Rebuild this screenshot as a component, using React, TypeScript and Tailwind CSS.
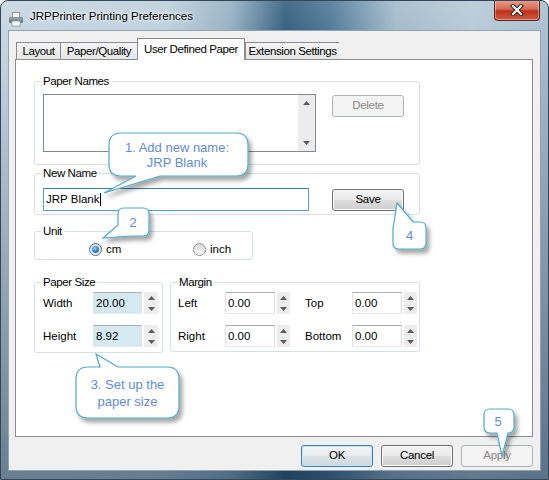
import React from 'react';

const ui = "font-['Liberation_Sans',Arial,sans-serif]";

const Tri = ({ up }: { up?: boolean }) => (
  <svg width="7" height="4" viewBox="0 0 7 4">
    <path d={up ? 'M0 4 L3.5 0 L7 4 Z' : 'M0 0 L3.5 4 L7 0 Z'} fill="#5c5c5c" />
  </svg>
);

const Spin = ({ w = 'w-[13px]' }: { w?: string }) => (
  <div className={`ml-[2px] flex h-[22px] flex-col bg-[#ededed] ${w}`}>
    <div className="flex h-[11px] items-center justify-center">
      <Tri up />
    </div>
    <div className="flex h-[11px] items-center justify-center">
      <Tri />
    </div>
  </div>
);

const Box = ({ value, w, hl }: { value: string; w: string; hl?: boolean }) => (
  <div
    className={`h-[22px] border border-[#abadb3] border-b-[#e3e9ef] border-l-[#e2e3ea] border-r-[#dbdfe6] pl-[2px] pt-[2px] text-[11.5px] leading-[16px] text-black ${w} ${
      hl ? 'bg-[#d4e9f1]' : 'bg-white'
    }`}
  >
    {value}
  </div>
);

const Group = ({ label, className, children }: { label: string; className: string; children?: React.ReactNode }) => (
  <div className={`relative rounded-[3px] border border-[#d5dfe5] ${className}`}>
    <span className="absolute -top-[8px] left-[6px] bg-white px-[2px] text-[11.5px] leading-[14px] tracking-[-0.4px] text-black">
      {label}
    </span>
    {children}
  </div>
);

const Button = ({ label, kind = 'normal' }: { label: string; kind?: 'normal' | 'default' | 'disabled' }) => {
  const look =
    kind === 'disabled'
      ? 'border-[#adb2b5] bg-[#f4f4f4] text-[#8a8a8a]'
      : kind === 'default'
      ? 'border-[#3c7fb1] bg-[linear-gradient(180deg,#f2f5f7_0%,#eaeef1_49%,#dce3e8_50%,#cfd8de_100%)] shadow-[inset_0_0_0_1px_#c4e5f6] text-black'
      : 'border-[#707070] bg-[linear-gradient(180deg,#f2f2f2_0%,#ebebeb_49%,#dddddd_50%,#cfcfcf_100%)] shadow-[inset_0_0_0_1px_#fbfbfb] text-black';
  return (
    <div className={`flex h-[22px] w-[72px] items-center justify-center rounded-[3px] border text-[11.5px] tracking-[-0.3px] ${look}`}>
      {label}
    </div>
  );
};

const Radio = ({ checked }: { checked?: boolean }) => (
  <span
    className={`flex h-[13px] w-[13px] items-center justify-center rounded-full border bg-[linear-gradient(180deg,#d9d9d9_0%,#f7f7f7_100%)] ${
      checked ? 'border-[#3e6f99]' : 'border-[#8e8f8f]'
    }`}
  >
    {checked && <span className="h-[7px] w-[7px] rounded-full bg-[radial-gradient(circle_at_40%_35%,#9fd3f5_0%,#2a7bc4_55%,#134f8a_100%)]" />}
  </span>
);

const Tab = ({ label, w, active }: { label: string; w: string; active?: boolean }) =>
  active ? (
    <div className={`relative z-10 -mb-[1px] flex h-[22px] items-center justify-center border border-b-0 border-[#898c95] bg-white pt-[1px] text-[11.5px] tracking-[-0.4px] text-black ${w}`}>
      {label}
    </div>
  ) : (
    <div
      className={`flex h-[17px] items-center justify-center border border-b-0 border-r-0 border-[#898c95] bg-[linear-gradient(180deg,#f4f4f4_0%,#e6e6e6_100%)] pt-[1px] text-[11.5px] tracking-[-0.4px] text-black ${w}`}
    >
      {label}
    </div>
  );

const Printer = () => (
  <svg width="16" height="16" viewBox="0 0 16 16">
    <rect x="4.5" y="1.5" width="7" height="5" fill="#fff" stroke="#8a949c" />
    <rect x="1" y="6" width="14" height="6" rx="1.5" fill="#6f7b84" />
    <rect x="1.5" y="6.5" width="13" height="2" fill="#9aa5ad" />
    <rect x="4" y="10" width="8" height="5" fill="#fff" stroke="#9aa3aa" />
    <rect x="12" y="8" width="1.5" height="1.5" fill="#3fc3e0" />
  </svg>
);

const bubbles = [
  'M121 133 H236 Q248 133 248 145 V164 Q248 176 236 176 H160 L104 193 L136 176 H121 Q109 176 109 164 V145 Q109 133 121 133 Z',
  'M124 208 H143 Q149 208 149 214 V230 Q149 236 143 236 H130 L103 238 L118 225 V214 Q118 208 124 208 Z',
  'M88 367 H100 L96 354 L118 367 H167 Q179 367 179 379 V406 Q179 418 167 418 H88 Q76 418 76 406 V379 Q76 367 88 367 Z',
  'M393 229 L397 203 L413 222 H420 Q426 222 426 228 V243 Q426 249 420 249 H399 Q393 249 393 243 Z',
  'M490 409 H508 Q514 409 514 415 V427 Q514 433 508 433 L502 456 L497 433 H490 Q484 433 484 427 V415 Q484 409 490 409 Z',
];

const notes = [
  { cls: 'left-[109px] top-[133px] w-[136px] h-[43px] leading-[15px]', text: ['1. Add new name:', 'JRP Blank'] },
  { cls: 'left-[118px] top-[208px] w-[30px] h-[28px] leading-[15px]', text: ['2'] },
  { cls: 'left-[76px] top-[367px] w-[103px] h-[52px] leading-[17px]', text: ['3. Set up the', 'paper size'] },
  { cls: 'left-[393px] top-[222px] w-[33px] h-[27px] leading-[15px]', text: ['4'] },
  { cls: 'left-[484px] top-[409px] w-[28px] h-[24px] leading-[15px]', text: ['5'] },
];

export default function App() {
  return (
    <div className={`relative h-[480px] w-[549px] ${ui}`}>
      <div className="flex h-full w-full flex-col overflow-hidden rounded-t-[8px] border border-[#33475a] bg-[linear-gradient(180deg,rgba(255,255,255,0.12)_0%,rgba(0,0,0,0)_10%,rgba(15,40,65,0.5)_100%),linear-gradient(90deg,#c5d5e0_0%,#bdd0dc_30%,#93afc2_42%,#2f5b7b_52%,#4a7493_60%,#a0b9ca_72%,#b6c9d6_86%,#a7bdcd_100%)]">
        {/* title bar */}
        <div className="relative flex h-[29px] shrink-0 items-start">
          <div className="ml-[7px] mt-[10px]">
            <Printer />
          </div>
          <span className="ml-[6px] mt-[8px] text-[11.5px] leading-[15px] text-black [text-shadow:0_0_6px_#fff,0_0_3px_#fff]">
            JRPPrinter Printing Preferences
          </span>
          <div className="absolute -top-[1px] right-[8px] flex h-[21px] w-[46px] items-center justify-center rounded-b-[4px] border border-t-0 border-[#5a2a22] bg-[linear-gradient(180deg,#e8a293_0%,#d66a55_45%,#bd3218_55%,#d25a42_100%)] shadow-[inset_0_0_0_1px_rgba(255,255,255,0.35)]">
            <svg width="14" height="12" viewBox="0 0 14 12">
              <path d="M3 2 L11 10 M11 2 L3 10" stroke="#3b2520" strokeWidth="4.2" strokeLinecap="square" />
              <path d="M3 2 L11 10 M11 2 L3 10" stroke="#fff" strokeWidth="2.2" strokeLinecap="square" />
            </svg>
          </div>
        </div>

        {/* client area */}
        <div className="mx-[7px] h-[441px] border border-[#8fa3b2] bg-[#f0f0f0] px-[6px] pt-[7px]">
          <div className="ml-[1px] flex h-[21px] items-end">
            <Tab label="Layout" w="w-[44px]" />
            <Tab label="Paper/Quality" w="w-[77px]" />
            <Tab label="User Defined Paper" w="w-[108px]" active />
            <Tab label="Extension Settings" w="w-[94px]" />
          </div>

          <div className="h-[378px] w-[518px] border border-[#898c95] bg-white pl-[18px] pt-[21px]">
            <Group label="Paper Names" className="h-[84px] w-[386px]">
              <div className="flex items-start pl-[8px] pt-[12px]">
                <div className="flex h-[58px] w-[273px] justify-end border border-[#828790] bg-white">
                  <div className="flex h-full w-[17px] flex-col items-center justify-between bg-[#ececec] py-[6px]">
                    <Tri up />
                    <Tri />
                  </div>
                </div>
                <div className="ml-[16px] mt-[1px]">
                  <Button label="Delete" kind="disabled" />
                </div>
              </div>
            </Group>

            <Group label="New Name" className="mt-[8px] h-[42px] w-[386px]">
              <div className="flex items-start pl-[8px] pt-[14px]">
                <div className="flex h-[23px] w-[266px] items-center border border-[#569de5] border-t-[#3d7bad] bg-white pl-[2px] text-[11.5px] text-black">
                  JRP Blank
                  <span className="ml-[1px] h-[13px] w-[1px] bg-black" />
                </div>
                <div className="ml-[23px] mt-[1px]">
                  <Button label="Save" />
                </div>
              </div>
            </Group>

            <Group label="Unit" className="mt-[16px] h-[29px] w-[219px]">
              <div className="flex items-center pl-[54px] pt-[9px] text-[11.5px] text-black">
                <div className="flex w-[104px] items-center gap-[4px]">
                  <Radio checked />
                  <span>cm</span>
                </div>
                <div className="flex items-center gap-[4px]">
                  <Radio />
                  <span>inch</span>
                </div>
              </div>
            </Group>

            <div className="mt-[22px] flex gap-[7px]">
              <Group label="Paper Size" className="h-[71px] w-[129px]">
                <div className="flex flex-col gap-[11px] pl-[8px] pt-[9px] text-[11.5px] text-black">
                  <div className="flex items-center">
                    <span className="w-[50px] pt-[2px]">Width</span>
                    <Box value="20.00" w="w-[49px]" hl />
                    <Spin w="w-[14px]" />
                  </div>
                  <div className="flex items-center">
                    <span className="w-[50px] pt-[1px]">Height</span>
                    <Box value="8.92" w="w-[49px]" hl />
                    <Spin w="w-[14px]" />
                  </div>
                </div>
              </Group>

              <Group label="Margin" className="h-[70px] w-[250px]">
                <div className="flex flex-col gap-[11px] pl-[7px] pt-[9px] text-[11.5px] text-black">
                  <div className="flex items-center">
                    <span className="w-[47px] pt-[2px]">Left</span>
                    <Box value="0.00" w="w-[50px]" />
                    <Spin />
                    <span className="ml-[15px] w-[47px] pt-[2px]">Top</span>
                    <Box value="0.00" w="w-[50px]" />
                    <Spin />
                  </div>
                  <div className="flex items-center">
                    <span className="w-[47px] pt-[1px]">Right</span>
                    <Box value="0.00" w="w-[50px]" />
                    <Spin />
                    <span className="ml-[15px] w-[47px] pt-[1px]">Bottom</span>
                    <Box value="0.00" w="w-[50px]" />
                    <Spin />
                  </div>
                </div>
              </Group>
            </div>
          </div>

          <div className="mt-[8px] flex w-[518px] justify-end gap-[8px]">
            <Button label="OK" kind="default" />
            <Button label="Cancel" />
            <Button label="Apply" kind="disabled" />
          </div>
        </div>
      </div>

      {/* callouts */}
      <svg className="pointer-events-none absolute left-0 top-0" width="549" height="480" viewBox="0 0 549 480">
        <defs>
          <filter id="sh" x="-20%" y="-20%" width="150%" height="160%">
            <feDropShadow dx="3" dy="4" stdDeviation="2.2" floodColor="#000" floodOpacity="0.35" />
          </filter>
        </defs>
        {bubbles.map((d, i) => (
          <path key={i} d={d} fill="#fff" stroke="#4fabc6" strokeWidth="1.2" filter="url(#sh)" />
        ))}
      </svg>
      {notes.map((n, i) => (
        <div
          key={i}
          className={`pointer-events-none absolute flex flex-col items-center justify-center text-center text-[13px] text-[#5f8bd6] ${n.cls}`}
        >
          {n.text.map((t) => (
            <span key={t}>{t}</span>
          ))}
        </div>
      ))}
    </div>
  );
}
